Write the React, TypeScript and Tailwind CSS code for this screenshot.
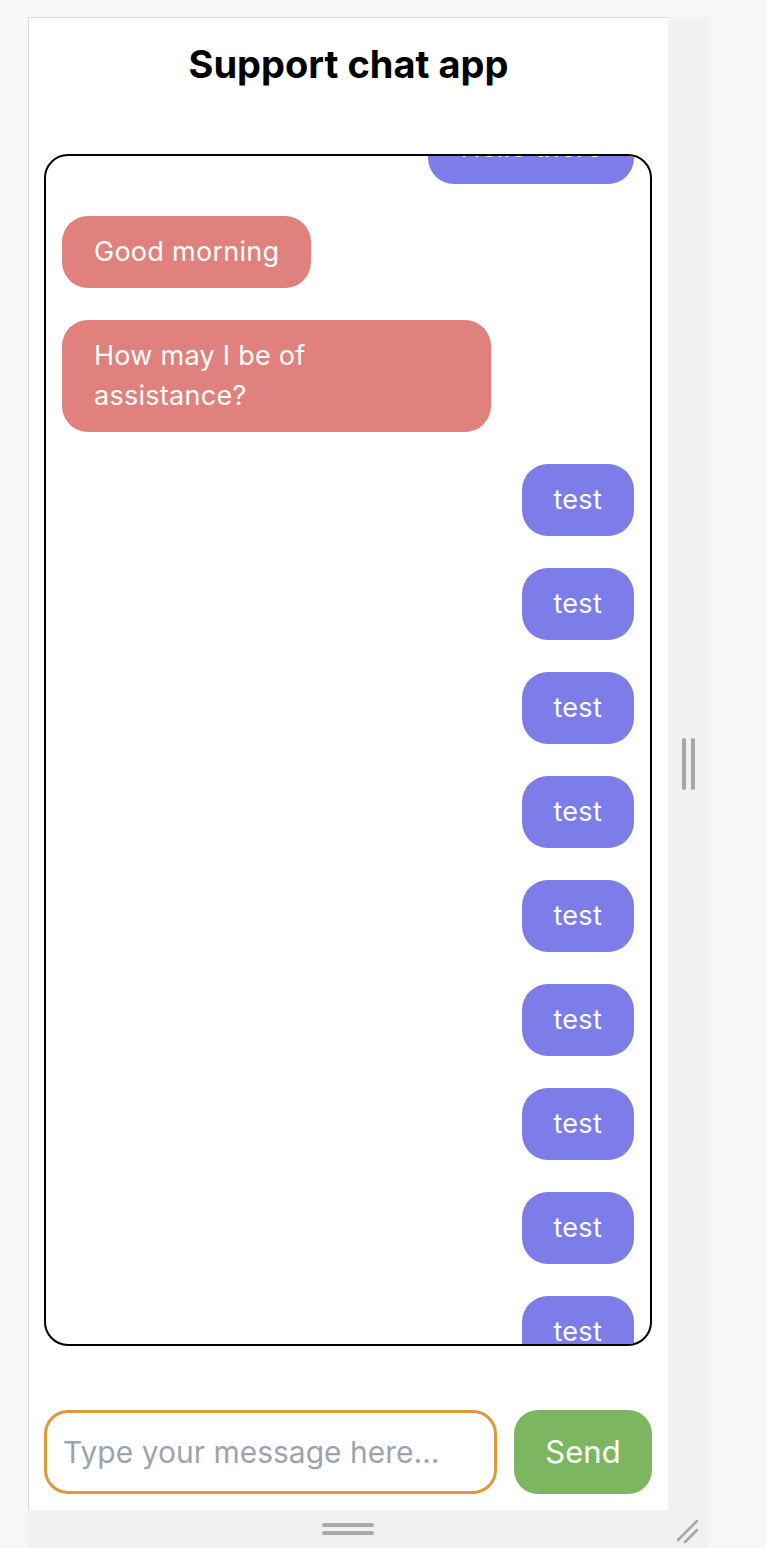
import { useEffect, useRef } from "react";

type Msg = { id: number; text: string; from: "me" | "agent" };

const messages: Msg[] = [
  { id: 1, text: "Hello there", from: "me" },
  { id: 2, text: "Good morning", from: "agent" },
  { id: 3, text: "How may I be of assistance?", from: "agent" },
  ...Array.from({ length: 9 }, (_, i) => ({ id: 4 + i, text: "test", from: "me" as const })),
];

const Bubble = ({ msg }: { msg: Msg }) => {
  const mine = msg.from === "me";
  return (
    <div className={mine ? "flex justify-end" : "flex justify-start"}>
      <div
        className={
          "max-w-[75%] rounded-[26px] px-8 py-4 text-[27px] leading-[40px] tracking-[0.01em] text-white " +
          (mine ? "bg-[#7c7de8]" : "bg-[#e0817e]")
        }
      >
        {msg.text}
      </div>
    </div>
  );
};

export default function App() {
  const listRef = useRef<HTMLDivElement>(null);

  useEffect(() => {
    if (listRef.current) listRef.current.scrollTop = 60;
  }, []);

  return (
    <div className="min-h-[1548px] bg-[#f6f7f7] pl-[28px] pt-[17px] font-['Inter','Liberation_Sans',sans-serif]">
      <div className="grid w-[680px] grid-cols-[640px_40px] grid-rows-[1493px_38px]">
        <div className="flex flex-col border-l border-t border-[#dcdcdc] bg-white">
          <h1 className="pt-[22px] text-center text-[38px] font-bold leading-[48px] text-black">
            Support chat app
          </h1>
          <div className="ml-[15px] mr-4 mt-[66px] h-[1192px] overflow-hidden rounded-[24px] border-2 border-black">
            <div ref={listRef} className="h-full overflow-hidden p-4">
              <div className="flex flex-col gap-8">
                {messages.map((m) => (
                  <Bubble key={m.id} msg={m} />
                ))}
              </div>
            </div>
          </div>
          <div className="ml-[15px] mr-4 mt-[64px] flex gap-[17px]">
            <input
              autoFocus
              type="text"
              placeholder="Type your message here..."
              className="h-[84px] min-w-0 flex-1 rounded-[24px] border-[3px] border-[#dc9a3a] px-4 text-[30px] text-black caret-black outline-none placeholder:text-[#9ca3af]"
            />
            <button className="h-[84px] w-[138px] shrink-0 rounded-[24px] bg-[#7db660] text-[31px] text-white">
              Send
            </button>
          </div>
        </div>
        <div className="flex items-center justify-center gap-[5px] bg-[#f0f1f3]">
          <span className="h-[52px] w-[4px] rounded-full bg-[#a6a6a6]" />
          <span className="h-[52px] w-[4px] rounded-full bg-[#a6a6a6]" />
        </div>
        <div className="col-span-2 flex items-center bg-[#f0f1f3]">
          <div className="flex flex-1 flex-col items-center gap-[4px]">
            <span className="h-[4px] w-[52px] rounded-full bg-[#a8a8a8]" />
            <span className="h-[4px] w-[52px] rounded-full bg-[#a8a8a8]" />
          </div>
          <svg width="40" height="38" viewBox="0 0 40 38" className="shrink-0">
            <line x1="10" y1="30" x2="29" y2="11" stroke="#a6a6a6" strokeWidth="2.5" strokeLinecap="round" />
            <line x1="17" y1="32" x2="29" y2="20" stroke="#a6a6a6" strokeWidth="2.5" strokeLinecap="round" />
          </svg>
        </div>
      </div>
    </div>
  );
}
